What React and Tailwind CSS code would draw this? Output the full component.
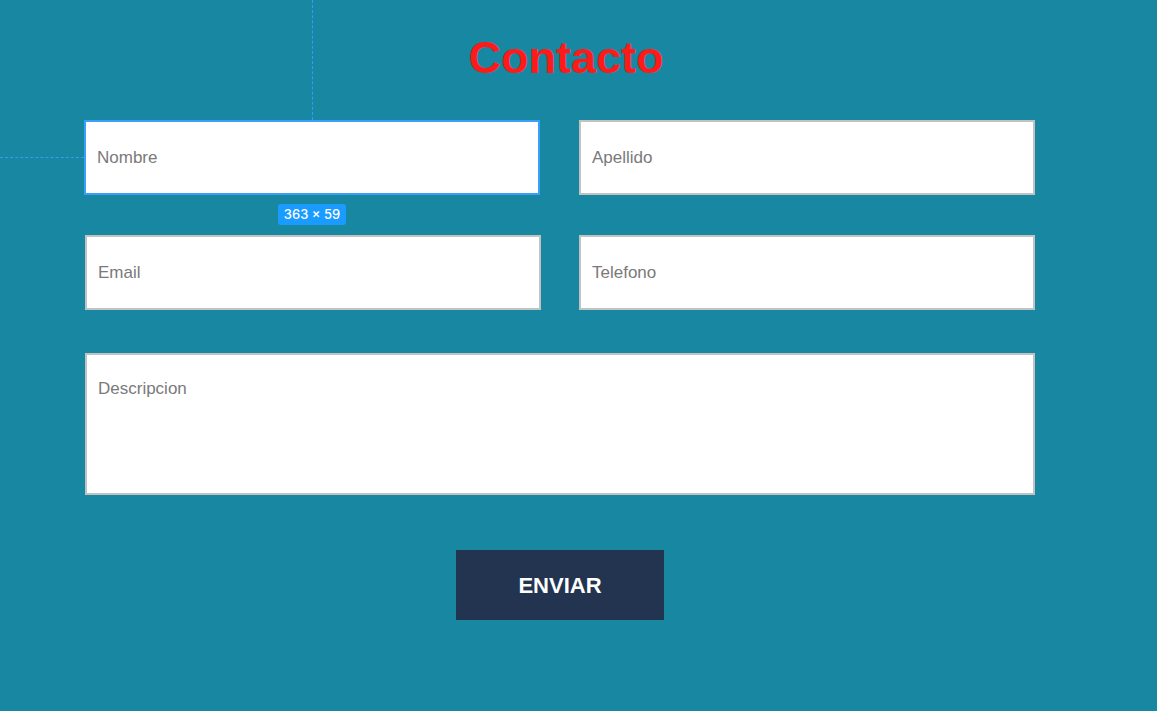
export default function App() {
  const inputCls =
    "h-[75px] w-full bg-white border-2 border-[#c2c2c2] px-[11px] text-[17px] text-[#333] placeholder:text-[#7a7a7a] outline-none";
  return (
    <div
      className="relative w-full h-[711px] overflow-hidden bg-[#1887a1]"
      style={{ fontFamily: '"Liberation Sans", Arial, sans-serif' }}
    >
      <h1 className="pt-[36px] pr-[25px] text-center text-[45px] leading-[44px] font-bold text-[#ff1a1a]">
        Contacto
      </h1>

      <form className="ml-[85px] mt-[40px] w-[950px]">
        <div className="grid grid-cols-2 gap-x-[38px] gap-y-[40px]">
          <input
            className="h-[75px] w-full bg-white border-2 border-[#3b9ff7] px-[11px] text-[17px] text-[#333] placeholder:text-[#7a7a7a] outline-none -ml-px"
            placeholder="Nombre"
          />
          <input className={inputCls} placeholder="Apellido" />
          <input className={inputCls} placeholder="Email" />
          <input className={inputCls} placeholder="Telefono" />
        </div>
        <textarea
          className="mt-[43px] block h-[142px] w-full resize-none bg-white border-2 border-[#c2c2c2] px-[11px] pt-[24px] text-[17px] leading-[20px] text-[#333] placeholder:text-[#7a7a7a] outline-none"
          placeholder="Descripcion"
        />
        <div className="mt-[55px] flex justify-center">
          <button
            type="button"
            className="h-[70px] w-[208px] bg-[#233450] text-white text-[22px] font-bold"
          >
            ENVIAR
          </button>
        </div>
      </form>

      {/* devtools overlay */}
      <div className="absolute left-[312px] top-0 h-[120px] border-l border-dashed border-[#2f9cff]" />
      <div className="absolute left-0 top-[157px] w-[84px] border-t border-dashed border-[#2f9cff]" />
      <div
        className="absolute left-[278px] top-[204px] h-[21px] w-[68px] rounded-[3px] bg-[#1a9bff] flex items-center justify-center text-[13px] font-medium text-white"
        style={{ fontFamily: 'Inter, "Liberation Sans", sans-serif' }}
      >
        363 × 59
      </div>
    </div>
  );
}
